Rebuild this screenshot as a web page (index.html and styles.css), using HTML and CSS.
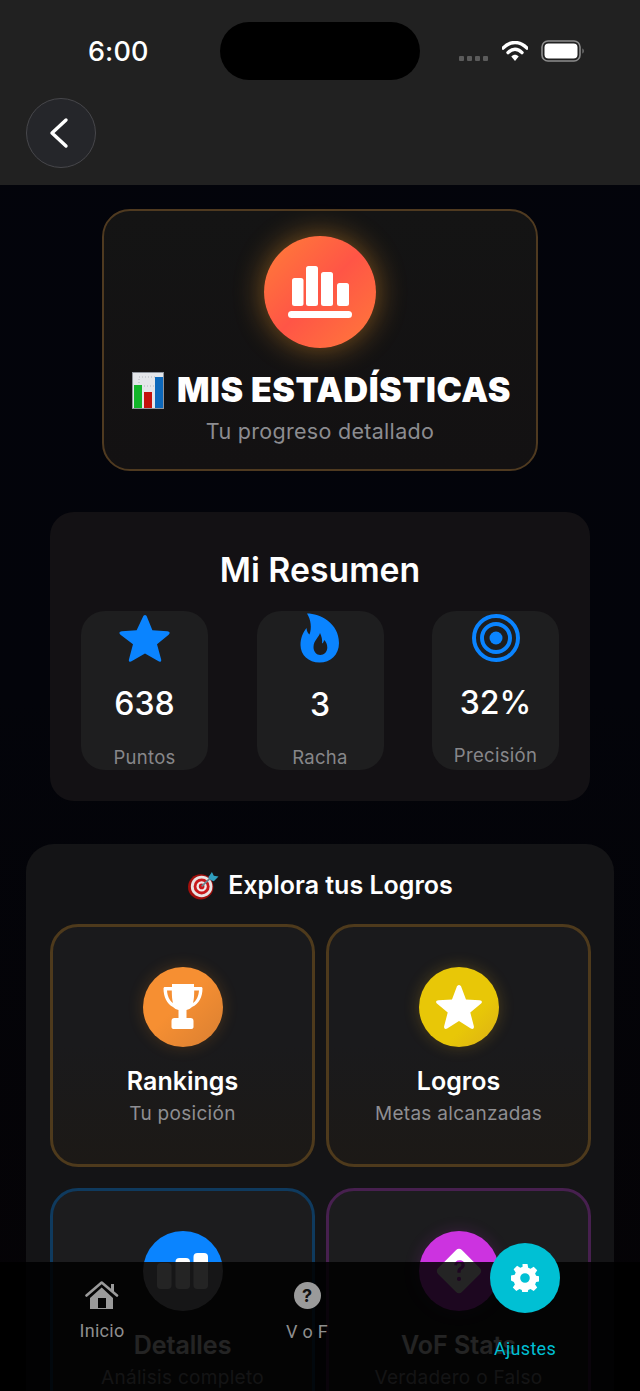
FILE: index.html
```html
<!DOCTYPE html>
<html lang="es">
<head>
<meta charset="utf-8">
<title>Mis Estadísticas</title>
<link rel="stylesheet" href="styles.css">
</head>
<body>
<div class="screen">
  <header class="topbar">
    <div class="status">
      <span class="time">6:00</span>
      <div class="island"></div>
      <div class="sys">
        <span class="dots"><i></i><i></i><i></i><i></i></span>
        <svg class="wifi" viewBox="0 0 26 20"><path d="M1 7.2C8-.4 18-.4 25 7.2" fill="none" stroke="#fff" stroke-width="3.4" stroke-linecap="round"/><path d="M6 11.6c4.300-4.400 9.700-4.400 14 0" fill="none" stroke="#fff" stroke-width="3.400" stroke-linecap="round"/><path d="M9.300 15.400c2.200-2.100 5.200-2.100 7.400 0L13 20z" fill="#fff"/></svg>
        <svg class="battery" viewBox="0 0 44 22"><rect x="1" y="1" width="38" height="20" rx="6" fill="none" stroke="#8d8d8d" stroke-width="1.600"/><rect x="3.500" y="3.500" width="33" height="15" rx="4" fill="#fff"/><path d="M41.500 8.500c1.500.6 1.500 4.400 0 5z" fill="#8d8d8d"/></svg>
      </div>
    </div>
    <button class="back" aria-label="Volver">
      <svg viewBox="0 0 20 32"><path d="M17 3 3 16l14 13" fill="none" stroke="#fff" stroke-width="3.400" stroke-linecap="round" stroke-linejoin="round"/></svg>
    </button>
  </header>

  <main class="content">
    <section class="hero">
      <div class="hero-icon">
        <svg viewBox="0 0 64 52"><rect x="4" y="12" width="11.500" height="28" rx="2.500" fill="#fff"/><rect x="18" y="0" width="12" height="40" rx="2.500" fill="#fff"/><rect x="33" y="6" width="12" height="34" rx="2.500" fill="#fff"/><rect x="49" y="17" width="12" height="23" rx="2.500" fill="#fff"/><rect x="0" y="45" width="64" height="7" rx="3.500" fill="#fff"/></svg>
      </div>
      <h1 class="hero-title">
        <svg class="chart-emoji" viewBox="0 0 32 37"><rect width="32" height="37" fill="#e4e6ea"/><rect x="0.500" y="0.500" width="31" height="36" fill="none" stroke="#8f949c"/><path d="M7 5h18v9H7z" fill="none" stroke="#b2b6bc" stroke-dasharray="1 2"/><rect x="2" y="13" width="8" height="23" fill="#12b52a"/><rect x="12" y="20" width="8" height="16" fill="#c4120c"/><rect x="23" y="5" width="8" height="31" fill="#0c68bb"/></svg>
        <span>MIS ESTADÍSTICAS</span>
      </h1>
      <p class="hero-sub">Tu progreso detallado</p>
    </section>

    <section class="summary">
      <h2 class="summary-title">Mi Resumen</h2>
      <div class="stats">
        <article class="stat">
          <svg class="stat-icon star-i" viewBox="0 0 54 52"><path d="M27 2c1 0 1.600.8 2 1.800l5.700 14.200 15.600 1.100c2.400.2 3.200 2 1.300 3.500L39.500 32.500l4.300 15.800c.5 2-1 3-2.700 2L27 42 13 50.300c-1.700 1-3.300 0-2.700-2l4.200-15.800L1.500 22.600c-1.900-1.500-1.100-3.300 1.300-3.500L18.300 18 24.900 3.800C25.400 2.800 26 2 27 2z" fill="#0a84ff"/></svg>
          <strong class="stat-value">638</strong>
          <span class="stat-label">Puntos</span>
        </article>
        <article class="stat">
          <svg class="stat-icon flame-i" viewBox="0 0 40 50"><path fill-rule="evenodd" d="M7 .5C20 .500 39 10 39 30c0 12-8.500 19.500-19.500 19.500S.5 42 .5 32C.5 25 3 19.500 6.500 15c.3 3 1 5 3 6.500C12 15 11 7 7 .5zM20 20c-.5 3.500-6.500 7.500-6.500 14 0 4.500 3 8 6.800 8s7-3 7-7.500c0-3.500-1.500-6-3.200-7.500-.3 2-1 3-2.100 3.500.5-3.500-.5-7.500-2-10.500z" fill="#0a84ff"/></svg>
          <strong class="stat-value">3</strong>
          <span class="stat-label">Racha</span>
        </article>
        <article class="stat">
          <svg class="stat-icon target-i" viewBox="0 0 48 48"><circle cx="24" cy="24" r="22" fill="none" stroke="#0a84ff" stroke-width="4"/><circle cx="24" cy="24" r="14" fill="none" stroke="#0a84ff" stroke-width="4"/><circle cx="24" cy="24" r="6.500" fill="#0a84ff"/></svg>
          <strong class="stat-value">32%</strong>
          <span class="stat-label">Precisión</span>
        </article>
      </div>
    </section>

    <section class="explore">
      <h2 class="explore-title">
        <svg class="dart-emoji" viewBox="0 0 34 32"><circle cx="14" cy="18" r="13.500" fill="#a20f0c"/><circle cx="15" cy="17.500" r="11.500" fill="#e8e2e2"/><circle cx="15" cy="17.500" r="8.500" fill="#c8181a"/><circle cx="15" cy="17.500" r="5.500" fill="#f0e8e8"/><circle cx="15" cy="17.500" r="3" fill="#c8181a"/><path d="M15 17.500 27 6" stroke="#6a8590" stroke-width="2"/><path d="M22 8l4-6 2 4 5 1-5 5-3-1z" fill="#2f9fbf"/></svg>
        <span>Explora tus Logros</span>
      </h2>
      <div class="tiles">
        <article class="tile tile-orange">
          <div class="badge badge-orange">
            <svg viewBox="0 0 40 48"><path fill-rule="evenodd" d="M9 1h22v3h7c1 0 1.500.6 1.500 1.500C39.500 14 36 21 29 24c-1.500 1.500-3.500 2.500-5.500 3v8h4c2 0 3 1 3 3v6c0 1-.8 2-2 2H10.500c-1.200 0-2-1-2-2v-6c0-2 1-3 3-3h4v-8c-2-.5-4-1.500-5.500-3C4 21 .5 14 .5 5.500.5 4.600 1 4 2 4h7zM4 7.500c.3 5 2.300 10 6 12.500-1-3.500-1.200-8-1.200-12.500zm32 0h-4.800c0 4.500-.2 9-1.200 12.500 3.700-2.500 5.700-7.500 6-12.500z" fill="#fff"/></svg>
          </div>
          <h3 class="tile-name">Rankings</h3>
          <p class="tile-sub">Tu posición</p>
        </article>
        <article class="tile tile-gold">
          <div class="badge badge-gold">
            <svg viewBox="0 0 48 48"><path d="M24 2c1.300 0 2 1 2.400 2.200L31 16.500l13.500.8c2.500.2 3.200 2 1.300 3.500L35.300 29.500l3.500 13.600c.6 2.300-1 3.600-3 2.400L24 38l-11.800 7.500c-2 1.200-3.600-.1-3-2.400l3.500-13.600L2.200 20.800C.3 19.300 1 17.500 3.500 17.300l13.500-.8 4.600-12.300C22 3 22.700 2 24 2z" fill="#fff"/></svg>
          </div>
          <h3 class="tile-name">Logros</h3>
          <p class="tile-sub">Metas alcanzadas</p>
        </article>
        <article class="tile tile-blue">
          <div class="badge badge-blue">
            <svg viewBox="0 0 52 36"><rect x="0" y="10" width="14.500" height="26" rx="4" fill="#fff"/><rect x="18.500" y="5" width="14.500" height="31" rx="4" fill="#fff"/><rect x="36.500" y="0" width="14.500" height="36" rx="4" fill="#fff"/></svg>
          </div>
          <h3 class="tile-name">Detalles</h3>
          <p class="tile-sub">Análisis completo</p>
        </article>
        <article class="tile tile-purple">
          <div class="badge badge-purple">
            <svg viewBox="0 0 56 56"><path fill-rule="evenodd" d="M24.500 2.500c2-2 5-2 7 0l22 22c2 2 2 5 0 7l-22 22c-2 2-5 2-7 0l-22-22c-2-2-2-5 0-7zM22 21c.5-3.500 3-6 6.500-6 4 0 6.500 2.500 6.500 5.800 0 2.700-1.500 4-3.200 5.200-1.200.9-1.800 1.500-1.800 3v1h-4v-1.500c0-2.600 1.200-3.800 2.800-5 1.300-1 2.200-1.600 2.200-2.700 0-1.300-1-2.100-2.500-2.100-1.700 0-2.600 1-2.900 2.600zM28 35a2.600 2.600 0 1 1 0 5.200 2.600 2.600 0 0 1 0-5.200z" fill="#fff"/></svg>
          </div>
          <h3 class="tile-name">VoF Stats</h3>
          <p class="tile-sub">Verdadero o Falso</p>
        </article>
      </div>
    </section>
  </main>

  <nav class="tabbar">
    <a class="tab tab-home">
      <svg class="tab-icon" viewBox="0 0 34 30"><path d="M1.500 14.500 16.700 1.500 32 14.500" fill="none" stroke="#9a9a9a" stroke-width="2.600" stroke-linecap="round" stroke-linejoin="round"/><rect x="26" y="3" width="3" height="8" fill="#9a9a9a"/><path fill-rule="evenodd" d="M16.700 6.500 5 17v11h23V17zM13 17h8v10h-8z" fill="#9a9a9a"/></svg>
      <span class="tab-label">Inicio</span>
    </a>
    <a class="tab tab-vof">
      <span class="vof-icon">?</span>
      <span class="tab-label">V o F</span>
    </a>
    <a class="tab tab-settings">
      <span class="fab">
        <svg viewBox="0 0 28 28"><path fill-rule="evenodd" d="M11.500 0h5l.7 3.700 2.300 1 3.200-2 3.500 3.500-2.100 3.200 1 2.300 3.700.700v5l-3.700.7-1 2.300 2.100 3.200-3.500 3.500-3.200-2.100-2.300 1-.7 3.700h-5l-.7-3.700-2.300-1-3.200 2.100-3.500-3.500 2.100-3.200-1-2.300L0 16.500v-5l3.700-.7 1-2.300-2.100-3.200 3.500-3.500 3.200 2 2.300-1zM14 9.200a4.800 4.800 0 1 0 0 9.600 4.800 4.800 0 0 0 0-9.600z" fill="#fff"/></svg>
      </span>
      <span class="tab-label tab-label-active">Ajustes</span>
    </a>
  </nav>
</div>
</body>
</html>
```
FILE: styles.css
```css
* { box-sizing: border-box; }
html, body { margin: 0; padding: 0; background: #000; }
.screen {
  position: relative;
  width: 640px;
  height: 1391px;
  overflow: hidden;
  font-family: Inter, "Liberation Sans", sans-serif;
  color: #fff;
  background: linear-gradient(180deg, #03040b 0%, #03040a 50%, #050305 100%);
}

/* Top bar */
.topbar { height: 185px; padding-top: 22px; background: #212121; }
.status { display: grid; grid-template-columns: 220px 200px 220px; height: 58px; align-items: center; }
.time { font-size: 27px; font-weight: 500; text-align: left; padding-left: 88px; letter-spacing: .1px; color: #fff; }
.island { height: 58px; border-radius: 29px; background: #000; }
.sys { display: flex; align-items: center; padding-left: 39px; }
.dots { display: flex; gap: 3px; margin-top: 14px; width: 32px; }
.dots i { width: 5px; height: 5px; border-radius: 1px; background: #5b5b5b; }
.wifi { width: 26px; height: 20px; margin-left: 11px; }
.battery { width: 44px; height: 22px; margin-left: 13px; }
.back {
  display: flex; align-items: center; justify-content: center;
  width: 70px; height: 70px; margin: 18px 0 0 26px; padding: 0 4px 0 0;
  border-radius: 50%; background: #25262a; border: 1px solid #47474b;
}
.back svg { width: 20px; height: 32px; }

/* Content */
.content { display: flex; flex-direction: column; align-items: center; padding-top: 24px; }

.hero {
  display: flex; flex-direction: column; align-items: center;
  width: 436px; height: 262px; padding-top: 25px;
  border: 2px solid #4f3a20; border-radius: 28px;
  background: linear-gradient(180deg, #141414, #131112);
}
.hero-icon {
  display: flex; align-items: center; justify-content: center;
  width: 112px; height: 112px; border-radius: 50%;
  background: linear-gradient(135deg, #ff7e38 0%, #ff5546 50%, #ff7a3a 100%);
  box-shadow: 0 0 30px rgba(255, 160, 40, .48);
}
.hero-icon svg { width: 64px; height: 52px; }
.hero-title {
  display: flex; align-items: center; gap: 13px;
  margin: 22px 0 0; padding-left: 3px; font-size: 34px; line-height: 40px; font-weight: 900; letter-spacing: .5px;
}
.chart-emoji { width: 32px; height: 37px; }
.hero-sub { margin: 8px 0 0; font-size: 21.500px; line-height: 26px; color: #8c8c90; letter-spacing: .3px; }

.summary {
  width: 540px; height: 289px; margin-top: 41px; padding: 38px 31px 0;
  border-radius: 24px; background: #131114;
}
.summary-title { margin: 0; text-align: center; font-size: 33.800px; line-height: 40px; font-weight: 600; }
.stats { display: grid; grid-template-columns: repeat(3, 127px); justify-content: space-between; margin-top: 21px; }
.stat {
  display: flex; flex-direction: column; align-items: center;
  height: 159px; padding-top: 2px; border-radius: 24px; background: #1e1e1f;
}
.stat-icon { display: block; }
.star-i { width: 54px; height: 50px; margin-bottom: 21px; }
.flame-i { width: 40px; height: 50px; margin-bottom: 22px; }
.target-i { width: 48px; height: 48px; margin: 1px 0 21px; }
.stat-value { font-size: 32px; line-height: 40px; font-weight: 500; }
.stat-label { margin-top: 21px; font-size: 18.500px; line-height: 24px; color: #87878a; letter-spacing: .3px; }
.target-i ~ .stat-label { margin-top: 20px; }
.flame-i ~ .stat-label { margin-top: 20px; }

.explore {
  width: 588px; height: 700px; margin-top: 43px; padding: 23px 24px 0;
  border-radius: 28px; background: #141416;
}
.explore-title {
  display: flex; align-items: center; justify-content: center; gap: 8px;
  margin: 0; font-size: 25px; line-height: 36px; font-weight: 600;
}
.dart-emoji { width: 33px; height: 30px; }
.tiles { display: grid; grid-template-columns: 265px 265px; column-gap: 11px; row-gap: 21px; margin-top: 21px; }
.tile {
  display: flex; flex-direction: column; align-items: center;
  height: 243px; padding-top: 40px; border: 3px solid; border-radius: 28px;
  background: linear-gradient(180deg, #1a1a1c 50%, #1c1916);
}
.tile-orange, .tile-gold { border-color: #4e3a1c; }
.tile-blue { border-color: #0f3a5e; background: #1c1c1e; }
.tile-purple { border-color: #47204f; background: #1c1c1e; }
.badge { display: flex; align-items: center; justify-content: center; width: 80px; height: 80px; border-radius: 50%; }
.badge-orange { background: linear-gradient(135deg, #f68f32 45%, #d97f32); box-shadow: 0 0 16px rgba(255, 150, 30, .2); }
.badge-gold { background: linear-gradient(135deg, #e8c707 65%, #dcb016); box-shadow: 0 0 16px rgba(255, 190, 30, .22); }
.badge-blue { background: linear-gradient(180deg, #0a84ff 31px, #9b9ba1 31px); }
.badge-purple { background: #cc33e0; box-shadow: 0 0 16px rgba(204, 51, 224, .18); }
.badge-orange svg { width: 40px; height: 48px; }
.badge-gold svg { width: 48px; height: 48px; }
.badge-blue svg { width: 52px; height: 36px; }
.badge-purple svg { width: 46px; height: 46px; }
.tile-name { margin: 16px 0 0; font-size: 25px; line-height: 36px; font-weight: 600; }
.tile-sub { margin: 2px 0 0; font-size: 19px; line-height: 26px; color: #8e8e92; letter-spacing: .3px; }

/* Bottom nav overlays the scrolled content */
.tabbar {
  position: absolute; left: 0; right: 0; bottom: 0; height: 129px;
  background: rgba(0, 0, 0, .86);
  font-family: Roboto, Inter, sans-serif;
}
.tab { position: absolute; display: flex; flex-direction: column; align-items: center; }
.tab-home { left: 62px; top: 19px; width: 80px; }
.tab-vof { left: 267px; top: 18px; width: 80px; }
.tab-settings { left: 480px; top: -19px; width: 90px; }
.tab-icon { width: 34px; height: 30px; }
.vof-icon {
  display: flex; align-items: center; justify-content: center;
  width: 27px; height: 27px; margin: 2px 0 5px; border-radius: 50%;
  background: #9a9a9a; color: #111; font: 700 18px/1 Inter, sans-serif;
}
.tab-label { margin-top: 9px; font-size: 18px; line-height: 22px; color: #8e8e8e; letter-spacing: .3px; white-space: nowrap; }
.tab-vof .tab-label { margin-top: 7px; }
.tab-settings .tab-label-active { margin-top: 25px; color: #00bfd3; }
.fab { display: flex; align-items: center; justify-content: center; width: 70px; height: 70px; border-radius: 50%; background: #00c0d4; }
.fab svg { width: 28px; height: 28px; }
```
